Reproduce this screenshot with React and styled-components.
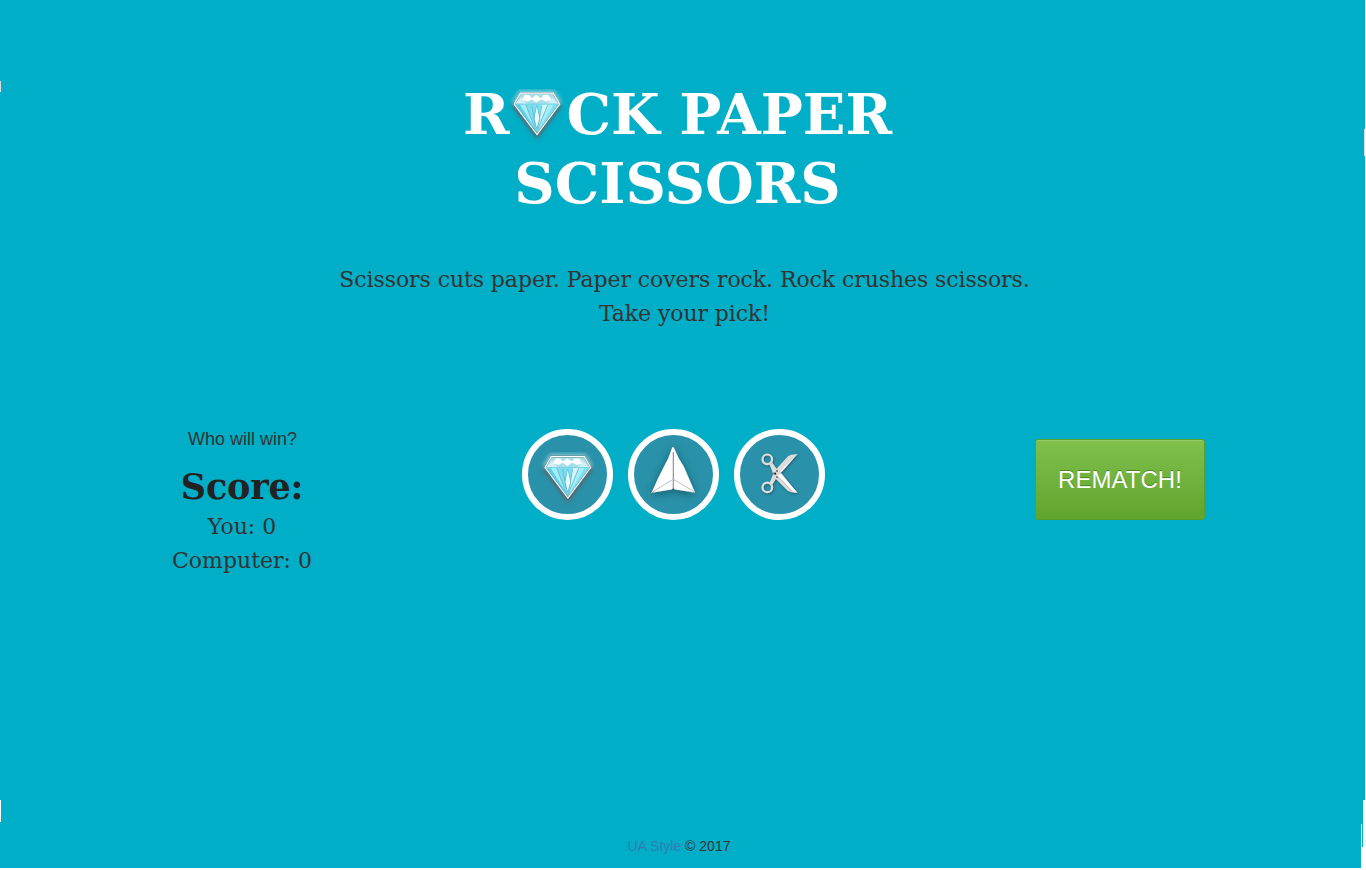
import React from 'react';
import styled, { createGlobalStyle } from 'styled-components';

const GlobalStyle = createGlobalStyle`
  *, *::before, *::after { box-sizing: border-box; }
  body { margin: 0; background: #fff; overflow: hidden; }
  h1, h2, p { margin: 0; }
`;
const serif = '"DejaVu Serif", serif';
const sans = '"Liberation Sans", Arial, sans-serif';

const Page = styled.div`
  position: relative;
  width: 1365px;
  height: 868px;
  background: #00aec7;
  display: flex;
  flex-direction: column;
  color: #333;
  font-family: ${serif};
`;
const Title = styled.h1`
  margin-top: 80px;
  padding-right: 10px;
  font: bold 56px/69px ${serif};
  color: #fff;
  text-align: center;
`;
const TitleLine = styled.div`
  height: 69px;
  display: flex;
  justify-content: center;
  white-space: pre;
`;
const TitleGem = styled.svg`
  width: 57px;
  height: 54px;
  margin: 7px 0 0;
  overflow: visible;
`;
const Rules = styled.p`
  margin-top: 45px;
  padding-left: 4px;
  font-size: 22px;
  line-height: 34px;
  letter-spacing: -0.08px;
  text-align: center;
`;
const Board = styled.main`
  display: flex;
  align-items: flex-start;
  margin-top: 98px;
  height: 407px;
`;
const ScorePanel = styled.section`
  width: 484px;
  text-align: center;
`;
const Status = styled.p`
  padding-left: 1px;
  font: 18px/20px ${sans};
`;
const ScoreTitle = styled.h2`
  margin-top: 14px;
  font-size: 35px;
  line-height: 48px;
  letter-spacing: -0.2px;
  color: #222;
`;
const ScoreLine = styled.p`
  position: relative;
  top: -1px;
  font-size: 22px;
  line-height: 34px;
`;
const Picks = styled.div`
  display: flex;
  gap: 15px;
  width: 514px;
  padding-left: 38px;
`;
const Pick = styled.button`
  width: 91px;
  height: 91px;
  padding: 0;
  border: 6px solid #fff;
  border-radius: 50%;
  background: #2991a9;
  svg { display: block; width: 79px; height: 79px; overflow: visible; }
`;
const Rematch = styled.button`
  width: 170px;
  height: 81px;
  margin: 10px 0 0 37px;
  padding: 0;
  border: 1px solid #5b9e2c;
  border-radius: 3px;
  background: linear-gradient(#80c04d, #60a52e);
  box-shadow: inset 0 1px 0 #94ce65;
  color: #fff;
  font: 24px/79px ${sans};
  letter-spacing: 0.05px;
  text-shadow: 0 -1px 0 #4a8721;
`;
const Footer = styled.footer`
  padding-right: 7px;
  font: 14px/20px ${sans};
  text-align: center;
  a { color: #337ab7; text-decoration: none; }
`;
const EdgeMark = styled.i`
  position: absolute;
  top: ${p => p.$top}px;
  left: ${p => p.$left}px;
  width: ${p => p.$w}px;
  height: ${p => p.$h}px;
  background: ${p => p.$color || '#fff'};
`;

function GemShape({ id }) {
  const outline = 'M6.6 .5H39.6L46 11.5 23.2 42 .3 11.5Z';
  return (
    <>
      <defs>
        <filter id={id + 'g'} x="-30%" y="-30%" width="160%" height="170%">
          <feGaussianBlur stdDeviation="2" />
        </filter>
      </defs>
      <path d={outline} transform="translate(0 2)" fill="#59646a" stroke="#59646a" strokeWidth="3" filter={`url(#${id}g)`} />
      <path d="M0 11 6.5 0H39.5L46.5 11" fill="#9ce2ec" stroke="#9ce2ec" strokeWidth="4" opacity=".8" filter={`url(#${id}g)`} />
      <path d={outline} fill="#79e0f3" />
      <path d="M6.6 .5H39.6L46 11.5H.3Z" fill="#a6deea" />
      <path d="M8 4 2 11H13L8 7ZM38 4 44 11H33L38 7Z" fill="#d5f0f5" />
      <path d="M11 2.5H15.5L18.5 6.3 14 9 8 7.5ZM17.1 6.3 22.6 2.2 28.1 6.3 22.6 10ZM29.5 2.5H34.5L38 7.5 32 9 27 6.3Z" fill="#fff" />
      <path d="M2 12H12L22 40Z" fill="#54d2eb" />
      <path d="M6 12H12L21 36Z" fill="#a6edf8" />
      <path d="M34 12H40L25 37Z" fill="#a6edf8" />
      <path d="M28 12H34L24.5 36Z" fill="#d0f7fc" />
      <path d="M12 12 22.7 40 34 12M18 13 21.5 32M28 13 24.5 32M23 13 20.2 26 23 36 26 26Z" fill="none" stroke="#69acbd" strokeWidth=".7" />
      <path d="M23 14 20.8 26 23 35 25.5 26Z" fill="#e6fdff" />
      <path d={outline} fill="none" stroke="#566f78" strokeOpacity=".75" strokeWidth="1.8" />
      <path d={outline} fill="none" stroke="#fff" strokeWidth="1.2" />
      <path d="M3 11.5H43" stroke="#6fcfe1" strokeWidth=".7" />
    </>
  );
}

function PaperIcon() {
  return (
    <svg viewBox="0 0 79 79">
      <defs><filter id="paperShade" x="-40%" y="-30%" width="180%" height="170%"><feDropShadow dx="0" dy="2" stdDeviation="4" floodColor="#123c49" floodOpacity=".65" /></filter></defs>
      <path d="M38 13Q39 11 40 13Q44 23 50 32L61 57.5 41 54.5 39.2 52.8 37.5 54.5 17.5 57.7Q24 43 30 31.5Q35 23 38 13Z" fill="#fff" filter="url(#paperShade)" />
      <path d="M39.3 17V53" stroke="#888" strokeWidth="1.1" fill="none" />
      <path d="M19 56.5 39.3 44.3 60 56.5" stroke="#c2c2c2" strokeWidth="1" fill="none" />
      <path d="M17.5 57.7 22 57M56.5 57 61 57.7" stroke="#aaa" strokeWidth=".8" />
    </svg>
  );
}

function ScissorsIcon() {
  return (
    <svg viewBox="0 0 79 79">
      <defs><filter id="scissorShade" x="-30%" y="-30%" width="160%" height="160%"><feDropShadow dx=".7" dy="1" stdDeviation=".8" floodColor="#24454e" floodOpacity=".8" /></filter></defs>
      <g filter="url(#scissorShade)">
        <g fill="none" stroke="#dedede" strokeWidth="2.2"><circle cx="27.3" cy="24.3" r="4.8" /><circle cx="27.3" cy="52.4" r="4.8" /></g>
        <path d="M29.5 29 32.5 28 38 36 42 39 53.3 53.3 57.7 57.7Q51 58 47.7 55.7L34.5 42.5Z" fill="#dedede" />
        <path d="M29.5 48 32.5 49.5 37 42 41.7 36.7 53.3 23.3 57.7 19.3Q51 19 48 21.3L37.5 32.8 34.5 36Z" fill="#dcdcdc" />
        <path d="M37.5 40.5 41 39 57 57.2H54Z" fill="#fff" />
        <path d="M40 36 56.5 20 54 23 42 36.5Z" fill="#f7f7f7" />
      </g>
      <path d="M36 35H38V37H36ZM32.5 37.5H34V39.5H32.5ZM36 41H38V43H36Z" fill="#888" />
      <circle cx="35.2" cy="38.7" r="1.1" fill="#222" />
      <path d="M37.5 41.5 52 56.5" stroke="#999" strokeWidth=".5" />
    </svg>
  );
}

export default function App() {
  return (
    <>
      <GlobalStyle />
      <Page>
        <Title>
          <TitleLine>R<TitleGem viewBox="0 0 57 54"><g transform="translate(4.8 5.6)"><GemShape id="titleGem" /></g></TitleGem>CK PAPER</TitleLine>
          <TitleLine>SCISSORS</TitleLine>
        </Title>
        <Rules>Scissors cuts paper. Paper covers rock. Rock crushes scissors.<br />Take your pick!</Rules>
        <Board>
          <ScorePanel>
            <Status>Who will win?</Status>
            <ScoreTitle>Score:</ScoreTitle>
            <ScoreLine>You: 0</ScoreLine>
            <ScoreLine>Computer: 0</ScoreLine>
          </ScorePanel>
          <Picks>
            <Pick aria-label="Rock"><svg viewBox="0 0 79 79"><g transform="translate(16.7 21)"><GemShape id="rock" /></g></svg></Pick>
            <Pick aria-label="Paper"><PaperIcon /></Pick>
            <Pick aria-label="Scissors"><ScissorsIcon /></Pick>
          </Picks>
          <Rematch>REMATCH!</Rematch>
        </Board>
        <Footer><a href="#">UA Style</a> © 2017</Footer>
        <EdgeMark $left={0} $top={81} $w={1} $h={11} $color="#ddd" />
        <EdgeMark $left={1364} $top={129} $w={1} $h={27} $color="#ddd" />
        <EdgeMark $left={0} $top={800} $w={1} $h={22} />
        <EdgeMark $left={1363} $top={800} $w={2} $h={68} />
        <EdgeMark $left={1361} $top={824} $w={1} $h={44} />
        <EdgeMark $left={1362} $top={847} $w={1} $h={21} />
      </Page>
    </>
  );
}
